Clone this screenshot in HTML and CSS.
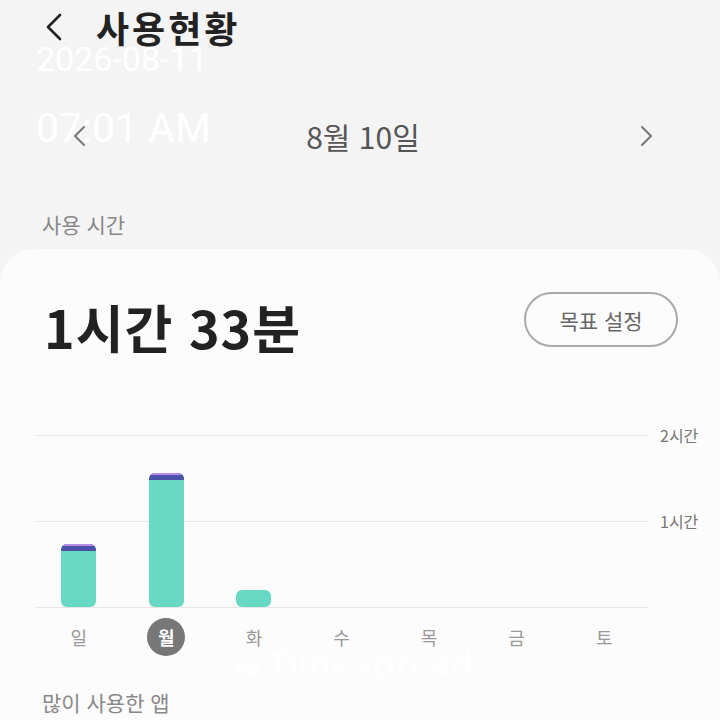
FILE: index.html
```html
<!DOCTYPE html>
<html lang="ko">
<head>
    <meta charset="UTF-8">
    <meta name="viewport" content="width=device-width, initial-scale=1.0">
    <title>사용현황</title>
    <link rel="stylesheet" href="styles.css">
</head>
<body>
    <div class="topbar">
        <svg class="back" width="20" height="30" viewBox="0 0 20 30">
            <path d="M16 3 L4 15 L16 27" fill="none" stroke="#222" stroke-width="2.6" stroke-linecap="round" stroke-linejoin="round"/>
        </svg>
        <h1>사용현황</h1>
    </div>

    <div class="stamp">
        <div class="stamp-date">2026-08-11</div>
        <div class="stamp-time">07:01 AM</div>
    </div>

    <div class="date-nav">
        <svg class="nav-arrow" width="16" height="22" viewBox="0 0 16 22">
            <path d="M12 2 L3 11 L12 20" fill="none" stroke="#777" stroke-width="2" stroke-linecap="round" stroke-linejoin="round"/>
        </svg>
        <div class="date-label">8월 10일</div>
        <svg class="nav-arrow" width="16" height="22" viewBox="0 0 16 22">
            <path d="M4 2 L13 11 L4 20" fill="none" stroke="#777" stroke-width="2" stroke-linecap="round" stroke-linejoin="round"/>
        </svg>
    </div>

    <div class="section-label top-label">사용 시간</div>

    <div class="card">
        <div class="card-head">
            <div class="total">1시간 33분</div>
            <button class="goal">목표 설정</button>
        </div>

        <div class="chart">
            <div class="plot">
                <div class="mid-line"></div>
                <div class="col"><div class="bar" style="height: 63px"><span class="cap"></span></div></div>
                <div class="col"><div class="bar" style="height: 134px"><span class="cap"></span></div></div>
                <div class="col"><div class="bar" style="height: 17px"></div></div>
                <div class="col"></div>
                <div class="col"></div>
                <div class="col"></div>
                <div class="col"></div>
            </div>
            <div class="axis">
                <span>2시간</span>
                <span>1시간</span>
            </div>
        </div>

        <div class="days">
            <span>일</span>
            <span class="today">월</span>
            <span>화</span>
            <span>수</span>
            <span>목</span>
            <span>금</span>
            <span>토</span>
        </div>

        <div class="watermark">
            <svg width="26" height="26" viewBox="0 0 26 26">
                <rect x="1" y="4" width="6" height="4" fill="#fff"/>
                <rect x="1" y="11" width="6" height="14" fill="#fff"/>
                <rect x="10" y="11" width="15" height="14" fill="#fff"/>
            </svg>
            Timespread
        </div>

        <div class="section-label apps-label">많이 사용한 앱</div>
    </div>
</body>
</html>
```

FILE: styles.css
```css
body {
    margin: 0;
    background-color: #f4f4f4;
    font-family: 'Noto Sans CJK KR', 'Noto Sans', sans-serif;
    color: #222;
    width: 720px;
    height: 720px;
    overflow: hidden;
    position: relative;
}
.topbar {
    display: flex;
    align-items: center;
    height: 54px;
    padding-left: 44px;
}
.back {
    margin-right: 32px;
}
h1 {
    margin: 0;
    font-size: 36px;
    font-weight: 700;
    letter-spacing: 3px;
}
.stamp {
    position: absolute;
    top: 39px;
    left: 36px;
    color: #fff;
    font-family: Roboto, sans-serif;
    z-index: 5;
}
.stamp-date {
    font-size: 34px;
    line-height: 40px;
}
.stamp-time {
    font-size: 41px;
    line-height: 48px;
    margin-top: 25px;
}
.date-nav {
    display: flex;
    align-items: center;
    justify-content: space-between;
    height: 58px;
    margin-top: 53px;
    padding: 0 66px 0 72px;
}
.date-label {
    font-size: 30px;
    color: #555;
}
.section-label {
    font-size: 21px;
    color: #888;
    padding-left: 42px;
    height: 36px;
    line-height: 36px;
}
.top-label {
    margin-top: 41px;
}
.card {
    background-color: #fcfcfc;
    border-radius: 34px 34px 0 0;
    margin-top: 7px;
    height: 480px;
    position: relative;
}
.card-head {
    display: flex;
    justify-content: space-between;
    align-items: flex-start;
    padding: 0 42px 0 44px;
}
.total {
    font-size: 52px;
    font-weight: 700;
    line-height: 60px;
    letter-spacing: 1px;
    margin-top: 48px;
}
.goal {
    font-family: inherit;
    font-size: 21px;
    color: #666;
    background: transparent;
    border: 2px solid #aaa;
    border-radius: 28px;
    width: 154px;
    height: 55px;
    margin-top: 43px;
}
.chart {
    display: flex;
    margin-top: 78px;
    padding-left: 35px;
}
.plot {
    position: relative;
    display: grid;
    grid-template-columns: repeat(7, 1fr);
    width: 613px;
    height: 173px;
    border-top: 1px solid #e6e6e6;
    border-bottom: 1px solid #e6e6e6;
    box-sizing: border-box;
}
.mid-line {
    position: absolute;
    left: 0;
    right: 0;
    top: 85px;
    border-top: 1px solid #e6e6e6;
}
.col {
    display: flex;
    align-items: flex-end;
    justify-content: center;
}
.bar {
    width: 35px;
    background-color: #67d9c3;
    border-radius: 6px;
    position: relative;
    overflow: hidden;
}
.cap {
    position: absolute;
    top: 0;
    left: 0;
    right: 0;
    height: 5px;
    background-color: #4b50a8;
    border-top: 2px solid #b88ee6;
}
.axis {
    display: flex;
    flex-direction: column;
    gap: 62px;
    margin-top: -12px;
    padding-left: 12px;
    font-size: 16px;
    color: #777;
}
.days {
    display: grid;
    grid-template-columns: repeat(7, 1fr);
    width: 613px;
    margin: 10px 0 0 35px;
    font-size: 18px;
    color: #999;
}
.days span {
    justify-self: center;
    width: 38px;
    height: 38px;
    line-height: 38px;
    text-align: center;
    border-radius: 50%;
}
.days .today {
    background-color: #777;
    color: #fff;
    font-weight: 700;
}
.watermark {
    position: absolute;
    top: 395px;
    left: 234px;
    display: flex;
    align-items: center;
    gap: 6px;
    font-family: 'Liberation Sans', sans-serif;
    font-weight: 700;
    font-size: 37px;
    color: #fff;
    opacity: 0.9;
}
.apps-label {
    margin-top: 28px;
}
```
